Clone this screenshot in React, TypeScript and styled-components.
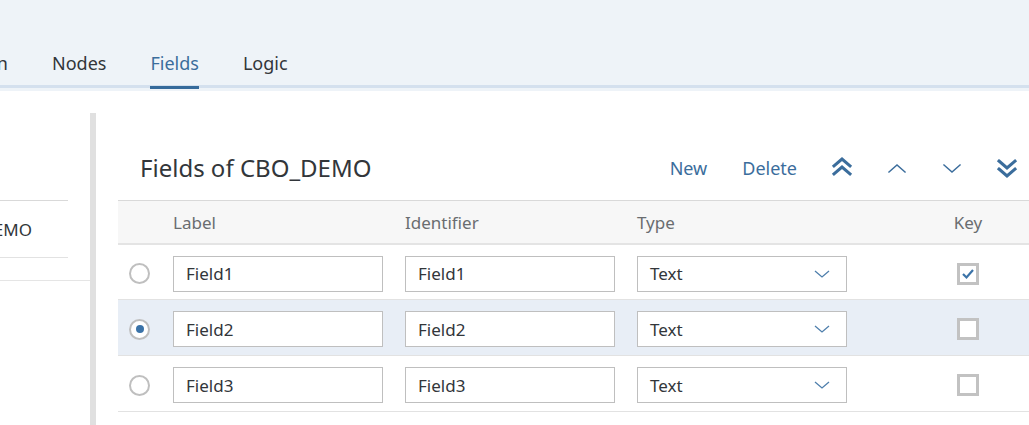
import React from "react";
import styled, { createGlobalStyle, css } from "styled-components";

const Global = createGlobalStyle`
  html, body { margin: 0; padding: 0; background: #ffffff; }
  body { font-family: "Noto Sans", "Open Sans", Arial, sans-serif; color: #32363a; }
  * { box-sizing: border-box; }
`;

const Page = styled.div`
  width: 1029px;
  height: 425px;
  overflow: hidden;
  display: flex;
  flex-direction: column;
  background: #ffffff;
`;

const Header = styled.header`
  background: #eef3f8;
  padding-top: 40px;
  padding-bottom: 3px;
  flex: none;
`;

const TabList = styled.nav`
  display: flex;
  gap: 44px;
  height: 48px;
  border-bottom: 3px solid #d4e0ee;
`;

const Tab = styled.div<{ $active?: boolean }>`
  position: relative;
  display: flex;
  align-items: center;
  font-size: 18px;
  white-space: nowrap;
  color: ${(p) => (p.$active ? "#3b6d9c" : "#32363a")};
  ${(p) =>
    p.$active &&
    css`
      &::after {
        content: "";
        position: absolute;
        left: 0;
        right: 0;
        bottom: -4px;
        height: 3px;
        background: #356a9b;
      }
    `}
`;

const ClippedTab = styled(Tab)`
  width: 8px;
  overflow: hidden;
  justify-content: flex-end;
`;

const Body = styled.div`
  flex: 1;
  display: flex;
  min-height: 0;
`;

const LeftPanel = styled.aside`
  width: 90px;
  flex: none;
  padding-top: 109px;
  overflow: hidden;
`;

const NodeList = styled.ul`
  list-style: none;
  margin: 0 22px 0 0;
  padding: 0;
  border-top: 1px solid #d9d9d9;
`;

const NodeItem = styled.li`
  height: 57px;
  display: flex;
  align-items: center;
  justify-content: flex-end;
  padding-right: 36px;
  overflow: hidden;
  white-space: nowrap;
  font-size: 17px;
  color: #32363a;
  border-bottom: 1px solid #e2e2e2;
`;

const Separator = styled.div`
  margin-top: 22px;
  border-top: 1px solid #e5e5e5;
`;

const Divider = styled.div`
  width: 6px;
  flex: none;
  margin-top: 22px;
  background: #e0e0e0;
`;

const RightPanel = styled.main`
  flex: 1;
  min-width: 0;
  padding: 52px 0 0 22px;
  display: flex;
  flex-direction: column;
`;

const Toolbar = styled.div`
  height: 57px;
  display: flex;
  align-items: center;
  padding-left: 22px;
  padding-bottom: 8px;
`;

const Title = styled.h2`
  margin: 0;
  flex: 1;
  font-size: 24px;
  font-weight: 400;
  color: #32363a;
`;

const Actions = styled.div`
  display: flex;
  align-items: center;
  gap: 11px;
`;

const TextButton = styled.button`
  border: none;
  background: none;
  padding: 0 12px;
  height: 36px;
  font-family: inherit;
  font-size: 18px;
  color: #3b6d9c;
  cursor: pointer;
`;

const IconButton = styled.button`
  border: none;
  background: none;
  width: 44px;
  height: 36px;
  padding: 0;
  display: flex;
  align-items: center;
  justify-content: center;
  color: #3b6d9c;
  cursor: pointer;
`;

const Table = styled.div`
  border-top: 1px solid #d9d9d9;
`;

const gridCols = css`
  display: grid;
  grid-template-columns: 44px 232px 232px 232px 1fr;
`;

const HeadRow = styled.div`
  ${gridCols};
  height: 44px;
  background: #f7f7f7;
  border-bottom: 2px solid #e4e4e4;
  align-items: center;
`;

const HeadCell = styled.div<{ $center?: boolean }>`
  padding-left: ${(p) => (p.$center ? "49px" : "11px")};
  text-align: ${(p) => (p.$center ? "center" : "left")};
  font-size: 17px;
  color: #6a6d70;
`;

const Row = styled.div<{ $selected?: boolean; $tall?: boolean }>`
  ${gridCols};
  height: ${(p) => (p.$tall ? "56px" : "55px")};
  padding-top: 3px;
  align-items: center;
  border-bottom: 1px solid #e2e2e2;
  background: ${(p) => (p.$selected ? "#e8eef6" : "#ffffff")};
`;

const Cell = styled.div<{ $center?: boolean }>`
  padding: 0 11px;
  display: flex;
  justify-content: ${(p) => (p.$center ? "center" : "flex-start")};
  ${(p) => p.$center && css`padding: 0 0 0 49px;`}
`;

const RadioCell = styled.div`
  display: flex;
  justify-content: center;
`;

const Radio = styled.span<{ $checked?: boolean }>`
  width: 21px;
  height: 21px;
  margin-left: -1px;
  border-radius: 50%;
  border: 2px solid #bfbfbf;
  background: #ffffff;
  display: flex;
  align-items: center;
  justify-content: center;
  &::before {
    content: "";
    width: 8px;
    height: 8px;
    border-radius: 50%;
    background: ${(p) => (p.$checked ? "#3b73a8" : "transparent")};
  }
`;

const Input = styled.div`
  width: 210px;
  height: 36px;
  border: 1px solid #bfbfbf;
  background: #ffffff;
  padding-left: 12px;
  display: flex;
  align-items: center;
  font-size: 17px;
  color: #32363a;
`;

const Select = styled(Input)`
  justify-content: space-between;
  padding-right: 16px;
`;

const Checkbox = styled.span`
  width: 22px;
  height: 22px;
  border: 3px solid #c2c2c2;
  background: #ffffff;
  display: flex;
  align-items: center;
  justify-content: center;
`;

const Chevron = ({ dir, bold, double }: { dir: "up" | "down"; bold?: boolean; double?: boolean }) => {
  const up = dir === "up";
  const w = bold ? 3 : 1.5;
  const pts = (y: number) => (up ? `3,${y + 7} 11,${y} 19,${y + 7}` : `3,${y} 11,${y + 7} 19,${y}`);
  return (
    <svg width="22" height="22" viewBox="0 0 22 22" fill="none" stroke="currentColor" strokeWidth={w} strokeLinecap="square">
      {double ? (
        <>
          <polyline points={pts(up ? 2 : 4)} />
          <polyline points={pts(up ? 10 : 12)} />
        </>
      ) : (
        <polyline points={pts(8)} />
      )}
    </svg>
  );
};

const SmallChevron = () => (
  <svg width="16" height="10" viewBox="0 0 16 10" fill="none" stroke="#4f7fac" strokeWidth="1.3">
    <polyline points="1,2 8,8 15,2" />
  </svg>
);

const Check = () => (
  <svg width="14" height="12" viewBox="0 0 14 12" fill="none" stroke="#3b73a8" strokeWidth="2.2">
    <polyline points="2,6 5.5,9.5 12,2" />
  </svg>
);

const rows = [
  { label: "Field1", id: "Field1", type: "Text", key: true, selected: false },
  { label: "Field2", id: "Field2", type: "Text", key: false, selected: true },
  { label: "Field3", id: "Field3", type: "Text", key: false, selected: false },
];

export default function App() {
  return (
    <Page>
      <Global />
      <Header>
        <TabList>
          <ClippedTab>Design</ClippedTab>
          <Tab>Nodes</Tab>
          <Tab $active>Fields</Tab>
          <Tab>Logic</Tab>
        </TabList>
      </Header>
      <Body>
        <LeftPanel>
          <NodeList>
            <NodeItem>CBO_DEMO</NodeItem>
          </NodeList>
          <Separator />
        </LeftPanel>
        <Divider />
        <RightPanel>
          <Toolbar>
            <Title>Fields of CBO_DEMO</Title>
            <Actions>
              <TextButton>New</TextButton>
              <TextButton>Delete</TextButton>
              <IconButton aria-label="Move to top"><Chevron dir="up" bold double /></IconButton>
              <IconButton aria-label="Move up"><Chevron dir="up" /></IconButton>
              <IconButton aria-label="Move down"><Chevron dir="down" /></IconButton>
              <IconButton aria-label="Move to bottom"><Chevron dir="down" bold double /></IconButton>
            </Actions>
          </Toolbar>
          <Table>
            <HeadRow>
              <HeadCell />
              <HeadCell>Label</HeadCell>
              <HeadCell>Identifier</HeadCell>
              <HeadCell>Type</HeadCell>
              <HeadCell $center>Key</HeadCell>
            </HeadRow>
            {rows.map((r, i) => (
              <Row key={r.label} $selected={r.selected} $tall={i > 0}>
                <RadioCell>
                  <Radio $checked={r.selected} />
                </RadioCell>
                <Cell><Input>{r.label}</Input></Cell>
                <Cell><Input>{r.id}</Input></Cell>
                <Cell>
                  <Select>
                    {r.type}
                    <SmallChevron />
                  </Select>
                </Cell>
                <Cell $center>
                  <Checkbox>{r.key && <Check />}</Checkbox>
                </Cell>
              </Row>
            ))}
          </Table>
        </RightPanel>
      </Body>
    </Page>
  );
}
